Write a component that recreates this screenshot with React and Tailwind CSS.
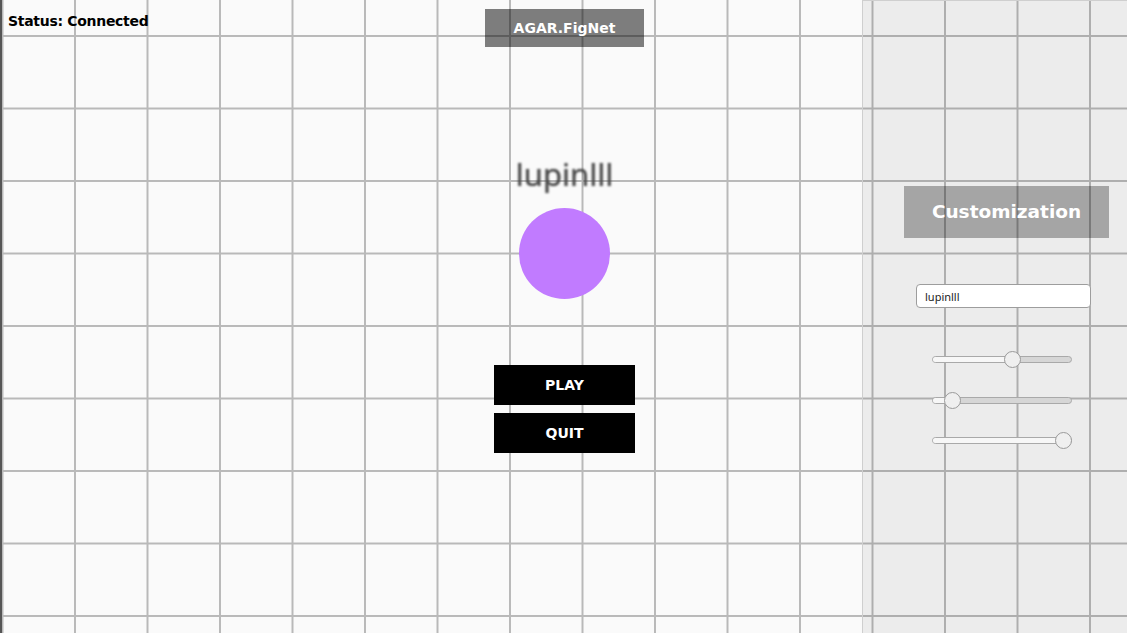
import React from "react";

const heading = { fontFamily: '"DejaVu Sans", "Open Sans", sans-serif' };

function Slider({ value }) {
  // value 0..100, thumb sits inside the track
  return (
    <div className="relative h-[17px] w-[140px] flex items-center">
      <div className="h-[7px] w-full rounded-full border border-[#a9a9a9] bg-[#d6d6d6] overflow-hidden">
        <div className="h-full bg-[#f7f7f7]" style={{ width: `calc(${value}% * 0.886 + 8px)` }} />
      </div>
      <div
        className="absolute top-0 h-[17px] w-[17px] rounded-full border border-[#9a9a9a] bg-[#efefef]"
        style={{ left: `calc((100% - 17px) * ${value / 100})` }}
      />
    </div>
  );
}

export default function App() {
  return (
    <div
      className="relative h-[633px] w-full overflow-hidden bg-[#fafafa] bg-[linear-gradient(to_right,#b9b9b9_2px,transparent_2px),linear-gradient(to_bottom,#b9b9b9_2px,transparent_2px)] bg-size-[72.5px_72.5px] bg-position-[1.5px_35px] shadow-[inset_2px_0_0_#555]"
      style={heading}
    >
      {/* status HUD */}
      <div className="absolute left-[8px] top-[11px] text-[14px] font-bold text-black tracking-[-0.3px]">
        Status: Connected
      </div>

      {/* main column */}
      <div className="flex flex-col items-center pl-[2px]">
        <div className="mt-[9px] flex h-[38px] w-[159px] items-center justify-center bg-black/50 text-[14px] font-bold text-white">
          AGAR.FigNet
        </div>

        <div
          className="mt-[107px] text-[31px] leading-[40px] text-[#4a4a4a] blur-[1.2px] [text-shadow:0_0_1px_#555]"
          style={{ fontFamily: '"Noto Sans", "DejaVu Sans", sans-serif' }}
        >
          lupinlll
        </div>

        <div className="mt-[14px] h-[91px] w-[91px] rounded-full bg-[#c17bff]" />

        <div className="mt-[66px] flex flex-col gap-[8px]">
          <button className="h-[40px] w-[141px] bg-black text-[14px] font-bold text-white">
            PLAY
          </button>
          <button className="h-[40px] w-[141px] bg-black text-[14px] font-bold text-white">
            QUIT
          </button>
        </div>
      </div>

      {/* customization panel */}
      <div className="absolute right-[-17px] top-0 flex h-full w-[282px] flex-col items-center border-l border-t border-[#cfcfcf] bg-black/[0.055]">
        <div className="mt-[185px] ml-[6px] flex h-[52px] w-[205px] items-center justify-center bg-black/30 text-[18.5px] font-bold text-white">
          Customization
        </div>

        <input
          readOnly
          value="lupinlll"
          className="mt-[46px] h-[24px] w-[175px] rounded-[4px] border border-[#9d9d9d] bg-white px-[8px] text-[11px] text-[#222] outline-none"
          style={{ fontFamily: '"Noto Sans", "DejaVu Sans", sans-serif' }}
        />

        <div className="mt-[43px] mr-[4px] flex flex-col gap-[23.5px]">
          <Slider value={59} />
          <Slider value={10} />
          <Slider value={100} />
        </div>
      </div>
    </div>
  );
}
